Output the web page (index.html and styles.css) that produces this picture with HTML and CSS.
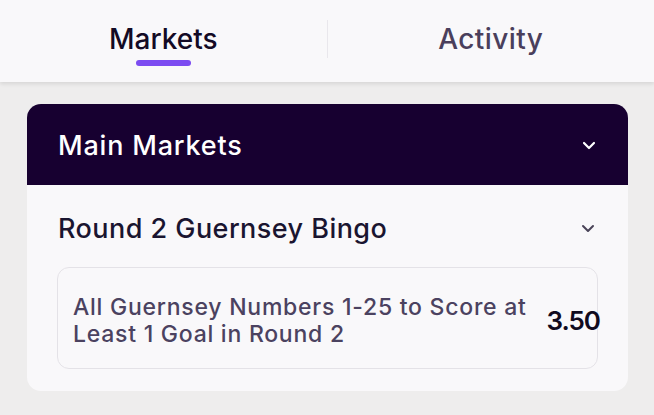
FILE: index.html
```html
<!DOCTYPE html>
<html>
<head>
<meta charset="utf-8">
<link rel="stylesheet" href="styles.css">
</head>
<body>
<header class="tabs">
  <div class="tab active"><span class="tab-label">Markets</span><span class="tab-bar"></span></div>
  <div class="tab-sep"></div>
  <div class="tab"><span class="tab-label">Activity</span></div>
</header>
<main class="content">
  <section class="card">
    <div class="card-head">
      <span class="card-title">Main Markets</span>
      <svg class="chev" width="14" height="9" viewBox="0 0 14 9"><path d="M2 2 L7 7 L12 2" fill="none" stroke="#ffffff" stroke-width="2.2" stroke-linecap="round" stroke-linejoin="round"/></svg>
    </div>
    <div class="card-body">
      <div class="group-row">
        <span class="group-title">Round 2 Guernsey Bingo</span>
        <svg class="chev" width="14" height="9" viewBox="0 0 14 9"><path d="M2 2 L7 7 L12 2" fill="none" stroke="#4a4458" stroke-width="2" stroke-linecap="round" stroke-linejoin="round"/></svg>
      </div>
      <div class="market">
        <span class="market-name">All Guernsey Numbers 1-25 to Score at Least 1 Goal in Round 2</span>
        <span class="market-odds">3.50</span>
      </div>
    </div>
  </section>
</main>
</body>
</html>
```
FILE: styles.css
```css
* { box-sizing: border-box; }
html, body { margin: 0; padding: 0; }
body {
  background: #eeeded;
  font-family: Inter, "Noto Sans", sans-serif;
  width: 654px;
  height: 415px;
  overflow: hidden;
}
.tabs {
  height: 82px;
  background: #f9f8fa;
  display: flex;
  align-items: stretch;
  box-shadow: 0 2px 4px rgba(0,0,0,0.10);
  position: relative;
  z-index: 1;
}
.tab {
  flex: 1;
  display: flex;
  flex-direction: column;
  align-items: center;
  padding-top: 21px;
}
.tab-label {
  font-size: 28px;
  font-weight: 500;
  color: #4a3f5c;
  letter-spacing: 0.4px;
  line-height: 36px;
}
.tab.active .tab-label { color: #130a25; letter-spacing: 0; }
.tab-bar {
  margin-top: 3px;
  width: 55px;
  height: 6px;
  border-radius: 3px;
  background: #7c4cf1;
}
.tab-sep {
  width: 1px;
  background: #e9e7ec;
  margin: 20px 0 24px;
}
.content {
  padding: 22px 26px 0 27px;
}
.card {
  border-radius: 14px;
  background: #f9f8fa;
  overflow: hidden;
}
.card-head {
  height: 81px;
  background: #170030;
  display: flex;
  align-items: center;
  justify-content: space-between;
  padding: 2px 32px 0 31px;
}
.card-title {
  color: #ffffff;
  font-size: 27px;
  font-weight: 500;
  letter-spacing: 0.8px;
}
.card-body {
  padding: 0 30px 22px 30px;
}
.group-row {
  height: 82px;
  display: flex;
  align-items: center;
  justify-content: space-between;
  padding: 4px 3px 0 1px;
}
.group-title {
  color: #1a1530;
  font-size: 27px;
  font-weight: 500;
  letter-spacing: 0.45px;
}
.market {
  height: 102px;
  border: 1px solid #e4e2e7;
  border-radius: 12px;
  display: flex;
  align-items: center;
  justify-content: space-between;
  padding: 5px 0 0 15px;
}
.market-name {
  width: 460px;
  color: #4b4260;
  font-size: 23px;
  font-weight: 500;
  line-height: 27px;
  letter-spacing: 0.75px;
}
.market-odds {
  color: #100a1e;
  font-size: 26px;
  font-weight: 600;
  margin-right: -3px;
  letter-spacing: -1px;
}
```
